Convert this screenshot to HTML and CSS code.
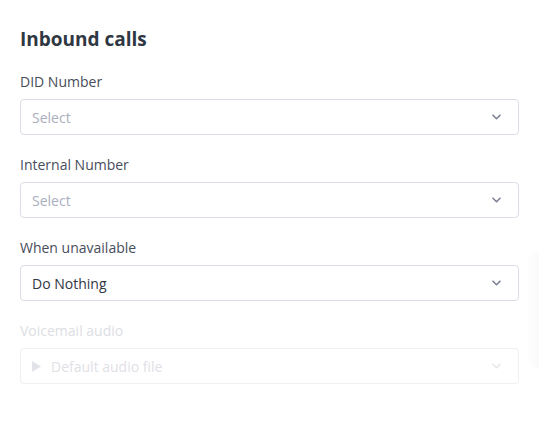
FILE: index.html
```html
<!DOCTYPE html>
<html>
    <head>
        <link rel="stylesheet" href="styles.css">
    </head>
    <body>
        <div id="panel">
            <h2 class="title">Inbound calls</h2>

            <div class="field">
                <label class="label">DID Number</label>
                <div class="select">
                    <span class="placeholder">Select</span>
                    <svg class="chevron" width="9" height="6" viewBox="0 0 9 6"><path d="M1 1.2l3.5 3.5 3.5-3.5" fill="none" stroke="currentColor" stroke-width="1.6" stroke-linecap="round" stroke-linejoin="round"/></svg>
                </div>
            </div>

            <div class="field">
                <label class="label">Internal Number</label>
                <div class="select">
                    <span class="placeholder">Select</span>
                    <svg class="chevron" width="9" height="6" viewBox="0 0 9 6"><path d="M1 1.2l3.5 3.5 3.5-3.5" fill="none" stroke="currentColor" stroke-width="1.6" stroke-linecap="round" stroke-linejoin="round"/></svg>
                </div>
            </div>

            <div class="field">
                <label class="label">When unavailable</label>
                <div class="select">
                    <span class="value">Do Nothing</span>
                    <svg class="chevron" width="9" height="6" viewBox="0 0 9 6"><path d="M1 1.2l3.5 3.5 3.5-3.5" fill="none" stroke="currentColor" stroke-width="1.6" stroke-linecap="round" stroke-linejoin="round"/></svg>
                </div>
            </div>

            <div class="field disabled">
                <label class="label">Voicemail audio</label>
                <div class="select">
                    <svg class="play" width="9" height="11" viewBox="0 0 9 11"><path d="M0 0l9 5.5L0 11z" fill="currentColor"/></svg>
                    <span class="placeholder">Default audio file</span>
                    <svg class="chevron" width="9" height="6" viewBox="0 0 9 6"><path d="M1 1.2l3.5 3.5 3.5-3.5" fill="none" stroke="currentColor" stroke-width="1.6" stroke-linecap="round" stroke-linejoin="round"/></svg>
                </div>
            </div>
        </div>
        <div id="edgeshadow"></div>
    </body>
</html>
```
FILE: styles.css
```css
*{ padding: 0px; margin: 0px; box-sizing: border-box; }

html, body
{
    background: white;
    width: 100%;
    height: 100%;
    overflow: hidden;
    font-family: "Open Sans", "Liberation Sans", sans-serif;
}

#panel
{
    padding: 27px 20px 0 20px;
    width: 539px;
}

.title
{
    font-size: 19px;
    line-height: 24px;
    font-weight: 700;
    color: #2f3742;
    margin-bottom: 21px;
}

.field
{
    display: flex;
    flex-direction: column;
    margin-bottom: 20px;
}

.label
{
    font-size: 14px;
    line-height: 20px;
    color: #474d5a;
    margin-bottom: 7px;
}

.select
{
    display: flex;
    align-items: center;
    height: 36px;
    padding: 0 17px 0 11px;
    border: 1px solid #dcdde6;
    border-radius: 4px;
    background: white;
}

.placeholder
{
    flex: 1;
    font-size: 14px;
    color: #a9aebe;
}

.value
{
    flex: 1;
    font-size: 14px;
    color: #2f3742;
}

.chevron
{
    color: #7b8194;
}

.disabled .label { color: #dcdee3; }
.disabled .select { border-color: #eeeff3; }
.disabled .placeholder { color: #dfe1e6; }
.disabled .chevron { color: #e6e7ec; }

.play
{
    color: #e2e3e8;
    margin-right: 10px;
}

#edgeshadow
{
    position: absolute;
    right: 0;
    top: 252px;
    width: 14px;
    height: 116px;
    border-radius: 14px 0 0 14px;
    background: linear-gradient(to right, rgba(0,0,0,0), rgba(0,0,0,0.018));
}
```
